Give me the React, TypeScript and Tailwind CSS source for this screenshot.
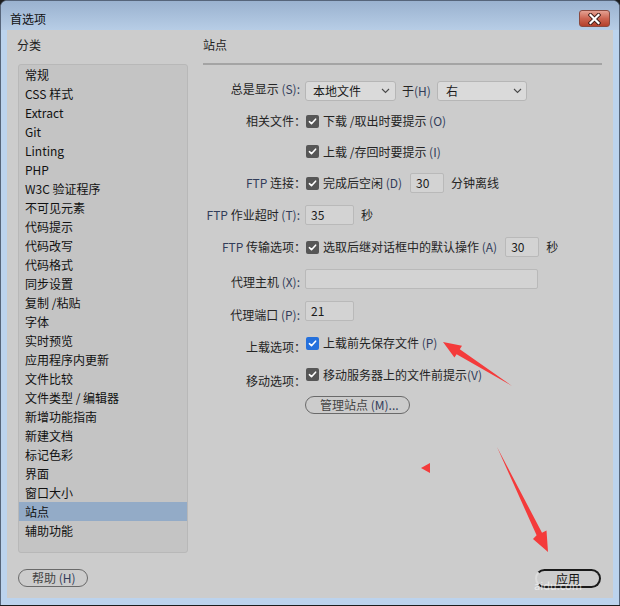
import React from "react";

const P = ({ children }: { children: React.ReactNode }) => (
  <span className="text-[#323d5a]">{children}</span>
);

const C = () => <span className="inline-block w-[6px] text-left">：</span>;

function Check({ blue = false }: { blue?: boolean }) {
  return (
    <span
      className={
        blue
          ? "flex h-[13px] w-[13px] shrink-0 items-center justify-center rounded-[2px] bg-[#2470dc]"
          : "flex h-[13px] w-[13px] shrink-0 items-center justify-center rounded-[2px] bg-[#565656]"
      }
    >
      <svg width="9" height="9" viewBox="0 0 9 9">
        <path
          d="M1.4 4.7 L3.5 6.7 L7.6 2.2"
          fill="none"
          stroke="#ffffff"
          strokeWidth="1.6"
          strokeLinecap="round"
          strokeLinejoin="round"
        />
      </svg>
    </span>
  );
}

function Chevron() {
  return (
    <svg width="9" height="6" viewBox="0 0 9 6">
      <path d="M1 1 L4.5 4.5 L8 1" fill="none" stroke="#4a4a4a" strokeWidth="1.1" />
    </svg>
  );
}

const items = [
  "常规",
  "CSS 样式",
  "Extract",
  "Git",
  "Linting",
  "PHP",
  "W3C 验证程序",
  "不可见元素",
  "代码提示",
  "代码改写",
  "代码格式",
  "同步设置",
  "复制 /粘贴",
  "字体",
  "实时预览",
  "应用程序内更新",
  "文件比较",
  "文件类型 / 编辑器",
  "新增功能指南",
  "新建文档",
  "标记色彩",
  "界面",
  "窗口大小",
  "站点",
  "辅助功能",
];

export default function App() {
  return (
    <div className="relative h-[606px] w-[620px] overflow-hidden bg-[#1c1c1c] font-['Noto_Sans_CJK_SC',sans-serif] text-[12px] leading-[16px]">
      <div className="flex h-[605px] w-[620px] flex-col rounded-t-[7px] border-x border-t border-[#56657a] bg-[#bcd3ed]">
        {/* title bar */}
        <div className="flex h-[29px] shrink-0 items-start justify-between rounded-t-[6px] bg-gradient-to-b from-[#9ab2cf] to-[#b7cde6]">
          <div className="pl-[9px] pt-[10px] text-[#111111]">首选项</div>
          <div className="mr-[9px] mt-[9px] flex h-[17px] w-[31px] items-center justify-center rounded-[3px] border border-[#8a4a40] bg-gradient-to-b from-[#e4a193] via-[#cc6552] to-[#b4402b]">
            <svg width="13" height="12" viewBox="0 0 13 12">
              <path d="M2.5 2 L10.5 10 M10.5 2 L2.5 10" stroke="#3b1a16" strokeWidth="4" strokeLinecap="square" />
              <path d="M2.5 2 L10.5 10 M10.5 2 L2.5 10" stroke="#ffffff" strokeWidth="2.2" strokeLinecap="square" />
            </svg>
          </div>
        </div>

        {/* content */}
        <div className="mx-[6px] flex h-[568px] shrink-0 bg-[#cccccc] pb-[10px] pl-[11px] pr-[11px] pt-[7px]">
          {/* left column */}
          <div className="flex w-[170px] shrink-0 flex-col">
            <div className="-ml-[1px] h-[16px] text-[#222222]">分类</div>
            <div className="mt-[11px] h-[489px] rounded-[3px] border border-[#b8b8b8] bg-[#c4c4c4] text-[#111111]">
              {items.map((it) => (
                <div
                  key={it}
                  className={
                    it === "站点"
                      ? "h-[19px] whitespace-nowrap bg-[#93abc7] pl-[6px] leading-[19px]"
                      : "h-[19px] whitespace-nowrap pl-[6px] leading-[19px]"
                  }
                >
                  {it}
                </div>
              ))}
            </div>
            <div className="mt-[16px] flex h-[18px] w-[70px] items-center rounded-full border border-[#6a6a6a] pl-[13px] text-[#454545]">
              帮助 <P>&nbsp;(H)</P>
            </div>
          </div>

          {/* right column */}
          <div className="ml-[15px] flex flex-1 flex-col text-[#242424]">
            <div className="h-[16px] text-[#222222]">站点</div>
            <div className="mt-[10px] h-[2px] bg-[#a4a4a4]" />
            <div className="mt-[11px] flex flex-col">
              {/* row 1 */}
              <div className="flex h-[30px] items-center">
                <div className="mb-[5px] w-[97px] shrink-0 whitespace-nowrap text-right">
                  总是显示 <P>(S):</P>
                </div>
                <div className="ml-[5px] flex items-center">
                  <div className="flex h-[20px] w-[91px] items-center justify-between rounded-[3px] border border-[#b6b6b6] bg-[#dadada] pl-[7px] pr-[5px] text-[#1a1a1a]">
                    <span>本地文件</span>
                    <Chevron />
                  </div>
                  <span className="ml-[6px] whitespace-nowrap">
                    于<P>(H)</P>
                  </span>
                  <div className="ml-[6px] flex h-[20px] w-[90px] items-center justify-between rounded-[3px] border border-[#b6b6b6] bg-[#dadada] pl-[8px] pr-[4px] text-[#1a1a1a]">
                    <span>右</span>
                    <Chevron />
                  </div>
                </div>
              </div>
              {/* row 2 */}
              <div className="flex h-[30px] items-center">
                <div className="w-[97px] shrink-0 whitespace-nowrap text-right">
                  相关文件<C />
                </div>
                <div className="ml-[6px] flex items-center gap-[4px] whitespace-nowrap">
                  <Check />
                  <span>
                    下载 /取出时要提示 <P>(O)</P>
                  </span>
                </div>
              </div>
              {/* row 3 */}
              <div className="flex h-[31px] items-center">
                <div className="w-[97px] shrink-0" />
                <div className="ml-[6px] flex items-center gap-[4px] whitespace-nowrap">
                  <Check />
                  <span>
                    上载 /存回时要提示 <P>(I)</P>
                  </span>
                </div>
              </div>
              {/* row 4 */}
              <div className="flex h-[32px] items-center">
                <div className="w-[97px] shrink-0 whitespace-nowrap text-right">
                  <P>FTP</P> 连接<C />
                </div>
                <div className="ml-[6px] flex items-center whitespace-nowrap">
                  <Check />
                  <span className="ml-[4px]">
                    完成后空闲 <P>(D)</P>
                  </span>
                  <div className="ml-[8px] flex h-[20px] w-[34px] items-center rounded-[2px] border border-[#b9b9b9] bg-[#d3d3d3] pl-[5px] text-[#1a1a1a]">
                    30
                  </div>
                  <span className="ml-[7px]">分钟离线</span>
                </div>
              </div>
              {/* row 5 */}
              <div className="flex h-[32px] items-center">
                <div className="w-[97px] shrink-0 whitespace-nowrap text-right">
                  <P>FTP</P> 作业超时 <P>(T):</P>
                </div>
                <div className="ml-[5px] flex items-center whitespace-nowrap">
                  <div className="flex h-[20px] w-[49px] items-center rounded-[2px] border border-[#b9b9b9] bg-[#d3d3d3] pl-[5px] text-[#1a1a1a]">
                    35
                  </div>
                  <span className="ml-[7px]">秒</span>
                </div>
              </div>
              {/* row 6 */}
              <div className="flex h-[32px] items-center">
                <div className="w-[97px] shrink-0 whitespace-nowrap text-right">
                  <P>FTP</P> 传输选项<C />
                </div>
                <div className="ml-[6px] flex items-center whitespace-nowrap">
                  <Check />
                  <span className="ml-[4px]">
                    选取后继对话框中的默认操作 <P>(A)</P>
                  </span>
                  <div className="ml-[8px] flex h-[20px] w-[34px] items-center rounded-[2px] border border-[#b9b9b9] bg-[#d3d3d3] pl-[5px] text-[#1a1a1a]">
                    30
                  </div>
                  <span className="ml-[7px]">秒</span>
                </div>
              </div>
              {/* row 7 */}
              <div className="flex h-[32px] items-center">
                <div className="mt-[5px] w-[97px] shrink-0 whitespace-nowrap text-right">
                  代理主机 <P>(X):</P>
                </div>
                <div className="ml-[5px] flex items-center">
                  <div className="h-[20px] w-[233px] rounded-[2px] border border-[#b9b9b9] bg-[#d3d3d3]" />
                </div>
              </div>
              {/* row 8 */}
              <div className="flex h-[32px] items-center">
                <div className="mt-[7px] w-[97px] shrink-0 whitespace-nowrap text-right">
                  代理端口 <P>(P):</P>
                </div>
                <div className="ml-[5px] flex items-center">
                  <div className="flex h-[20px] w-[49px] items-center rounded-[2px] border border-[#b9b9b9] bg-[#d3d3d3] pl-[5px] text-[#1a1a1a]">
                    21
                  </div>
                </div>
              </div>
              {/* row 9 */}
              <div className="flex h-[32px] items-center">
                <div className="mt-[8px] w-[97px] shrink-0 whitespace-nowrap text-right">
                  上载选项<C />
                </div>
                <div className="ml-[6px] flex items-center gap-[4px] whitespace-nowrap">
                  <Check blue />
                  <span>
                    上载前先保存文件 <P>(P)</P>
                  </span>
                </div>
              </div>
              {/* row 10 */}
              <div className="flex h-[31px] items-center">
                <div className="mt-[12px] w-[97px] shrink-0 whitespace-nowrap text-right">
                  移动选项<C />
                </div>
                <div className="ml-[6px] flex items-center gap-[4px] whitespace-nowrap">
                  <Check />
                  <span>
                    移动服务器上的文件前提示<P>(V)</P>
                  </span>
                </div>
              </div>
              {/* row 11 */}
              <div className="flex h-[30px] items-center">
                <div className="w-[97px] shrink-0" />
                <div className="ml-[5px] flex h-[18px] w-[105px] items-center whitespace-nowrap rounded-full border border-[#6a6a6a] pl-[14px] text-[#454545]">
                  管理站点 <P>&nbsp;(M)...</P>
                </div>
              </div>
            </div>

            <div className="mr-[1px] mt-auto flex h-[19px] w-[66px] items-center justify-center self-end rounded-full border-2 border-[#1a1a1a] border-l-[#dcdcdc] text-[#111111]">
              应用
            </div>
          </div>
        </div>
      </div>

      {/* annotations overlay */}
      <svg className="pointer-events-none absolute left-0 top-0" width="620" height="606" viewBox="0 0 620 606">
        <polygon points="443,342 462,345.8 459.8,349.2 512,386 456.6,354.2 454.4,357.6" fill="#f43b3b" />
        <polygon points="548,552 546.5,530.5 542,532.7 497,447 536.6,535.3 533,539" fill="#f43b3b" />
        <polygon points="421,468 430,463 430,473" fill="#f43b3b" />
      </svg>
      <div className="pointer-events-none absolute left-[534px] top-[579px] text-[11px] leading-[12px] text-white opacity-60">
        aidu.com
      </div>
    </div>
  );
}
